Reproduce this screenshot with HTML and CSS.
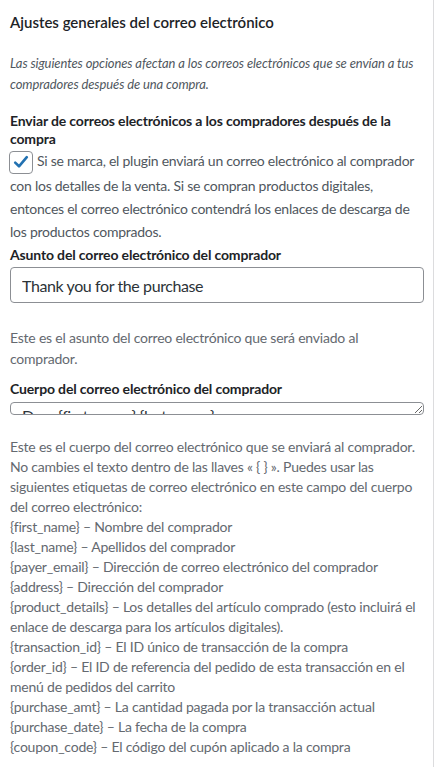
FILE: index.html
```html
<!DOCTYPE html>
<html lang="es">
<head>
    <meta charset="UTF-8">
    <meta name="viewport" content="width=device-width, initial-scale=1.0">
    <title>Ajustes generales del correo electrónico</title>
    <link rel="stylesheet" href="styles.css">
</head>
<body>
    <div class="panel">
        <h2 class="section-title">Ajustes generales del correo electrónico</h2>
        <p class="section-intro">Las siguientes opciones afectan a los correos electrónicos que se envían a tus compradores después de una compra.</p>

        <label class="field-label" for="sendBuyerEmail">Enviar de correos electrónicos a los compradores después de la compra</label>
        <p class="check-row">
            <span class="checkbox" id="sendBuyerEmail">
                <svg viewBox="0 0 20 20" width="20" height="20"><path d="M4.2 10.6 L8 14.3 L15.8 5.2" fill="none" stroke="#2271b1" stroke-width="2.6" stroke-linecap="round" stroke-linejoin="round"/></svg>
            </span>Si se marca, el plugin enviará un correo electrónico al comprador con los detalles de la venta. Si se compran productos digitales, entonces el correo electrónico contendrá los enlaces de descarga de los productos comprados.
        </p>

        <label class="field-label" for="buyerSubject">Asunto del correo electrónico del comprador</label>
        <input type="text" class="text-input" id="buyerSubject" value="Thank you for the purchase">
        <p class="description spaced">Este es el asunto del correo electrónico que será enviado al comprador.</p>

        <label class="field-label" for="buyerBody">Cuerpo del correo electrónico del comprador</label>
        <textarea class="body-input" id="buyerBody" rows="1">Dear {first_name} {last_name}</textarea>
        <p class="description tags">Este es el cuerpo del correo electrónico que se enviará al comprador. No cambies el texto dentro de las llaves « { } ». Puedes usar las siguientes etiquetas de correo electrónico en este campo del cuerpo del correo electrónico:<br>
        {first_name} – Nombre del comprador<br>
        {last_name} – Apellidos del comprador<br>
        {payer_email} – Dirección de correo electrónico del comprador<br>
        {address} – Dirección del comprador<br>
        {product_details} – Los detalles del artículo comprado (esto incluirá el enlace de descarga para los artículos digitales).<br>
        {transaction_id} – El ID único de transacción de la compra<br>
        {order_id} – El ID de referencia del pedido de esta transacción en el menú de pedidos del carrito<br>
        {purchase_amt} – La cantidad pagada por la transacción actual<br>
        {purchase_date} – La fecha de la compra<br>
        {coupon_code} – El código del cupón aplicado a la compra</p>
    </div>
</body>
</html>
```

FILE: styles.css
```css
body {
    margin: 0;
    padding: 0;
    background-color: #fff;
    font-family: Lato, "Noto Sans", sans-serif;
    color: #3c434a;
}

.panel {
    box-sizing: border-box;
    width: 434px;
    min-height: 767px;
    padding: 12px 10px 20px 10px;
    border-right: 1px solid #dcdcde;
}

.section-title {
    margin: 0;
    font-size: 15px;
    line-height: 20px;
    font-weight: 600;
    color: #1d2327;
}

.section-intro {
    margin: 21px 0 0 0;
    font-size: 13px;
    line-height: 21px;
    font-style: italic;
    letter-spacing: -0.1px;
    color: #50575e;
}

.field-label {
    display: block;
    margin-top: 17px;
    font-size: 14px;
    line-height: 18px;
    font-weight: 700;
    letter-spacing: -0.15px;
    color: #1d2327;
}

.check-row {
    margin: 1px 0 0 0;
    font-size: 14px;
    line-height: 23.3px;
    letter-spacing: -0.25px;
    color: #50575e;
}

.checkbox {
    display: inline-flex;
    align-items: center;
    justify-content: center;
    box-sizing: border-box;
    width: 24px;
    height: 23px;
    margin: 0 4px 0 -1px;
    vertical-align: -6px;
    border: 1px solid #8c8f94;
    border-radius: 4px;
    background-color: #fff;
}

.check-row + .field-label {
    margin-top: 3px;
}

.text-input {
    display: block;
    box-sizing: border-box;
    width: 414px;
    height: 36px;
    margin-top: 3px;
    padding: 0 11px;
    border: 1px solid #8c8f94;
    border-radius: 4px;
    font-family: inherit;
    font-size: 16px;
    letter-spacing: -0.4px;
    color: #2c3338;
    background-color: #fff;
}

.description {
    margin: 0;
    font-size: 14px;
    line-height: 21px;
    letter-spacing: -0.22px;
    color: #646970;
}

.spaced {
    margin-top: 24px;
}

.spaced + .field-label {
    margin-top: 11px;
}

.body-input {
    display: block;
    box-sizing: border-box;
    width: 414px;
    height: 13px;
    margin-top: 4px;
    padding: 3px 11px 0 11px;
    border: 1px solid #8c8f94;
    border-radius: 4px;
    font-family: inherit;
    font-size: 16px;
    line-height: 20px;
    letter-spacing: -0.4px;
    color: #2c3338;
    overflow: hidden;
    resize: vertical;
}

.tags {
    margin-top: 22px;
    line-height: 20px;
}
```
